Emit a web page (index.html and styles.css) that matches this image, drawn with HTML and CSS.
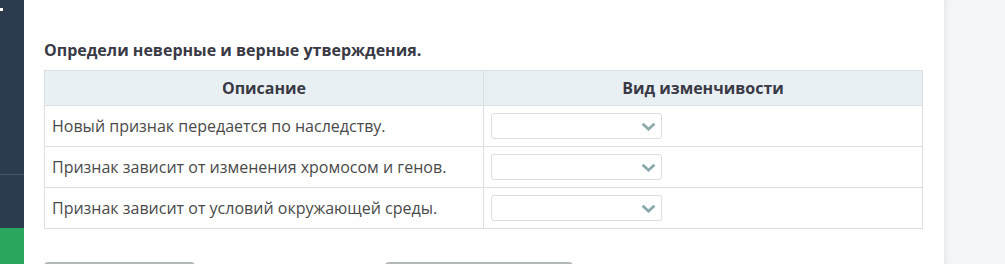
FILE: index.html
```html
<!DOCTYPE html>
<html lang="ru">
<head>
  <meta charset="UTF-8" />
  <title>Вид изменчивости</title>
  <link rel="stylesheet" href="styles.css">
</head>
<body>
  <!-- Left nav strip -->
  <div class="side">
    <span class="dot"></span>
    <div class="side-rule"></div>
    <div class="side-ok"></div>
  </div>

  <!-- Task -->
  <main class="task">
    <h2>Определи неверные и верные утверждения.</h2>
    <table class="grid">
      <thead>
        <tr><th>Описание</th><th>Вид изменчивости</th></tr>
      </thead>
      <tbody>
        <tr>
          <td>Новый признак передается по наследству.</td>
          <td><div class="pick"><svg viewBox="0 0 14 8"><path d="M1.5 1.5 7 6.5 12.5 1.5" /></svg></div></td>
        </tr>
        <tr>
          <td>Признак зависит от изменения хромосом и генов.</td>
          <td><div class="pick"><svg viewBox="0 0 14 8"><path d="M1.5 1.5 7 6.5 12.5 1.5" /></svg></div></td>
        </tr>
        <tr>
          <td>Признак зависит от условий окружающей среды.</td>
          <td><div class="pick"><svg viewBox="0 0 14 8"><path d="M1.5 1.5 7 6.5 12.5 1.5" /></svg></div></td>
        </tr>
      </tbody>
    </table>
    <div class="actions">
      <span class="btn b1"></span>
      <span class="btn b2"></span>
    </div>
  </main>

  <aside class="rest"></aside>
</body>
</html>
```

FILE: styles.css
```css
* { box-sizing: border-box; margin: 0; padding: 0; }
body {
  display: flex;
  height: 264px;
  overflow: hidden;
  font-family: 'Open Sans', sans-serif;
  color: #444;
  background: #fff;
}
.side {
  width: 24px;
  flex: none;
  display: flex;
  flex-direction: column;
  background: #2c3b4e;
}
.dot { width: 3px; height: 3px; margin: 8px 0 0 0; background: #fff; }
.side-rule { margin-top: 163px; height: 1px; background: #46566a; }
.side-ok { margin-top: 53px; flex: 1; background: #2aa75c; }

.task {
  width: 920px;
  flex: none;
  padding: 40px 21px 0 20px;
}
h2 {
  font-size: 16px;
  font-weight: 700;
  line-height: 20px;
  color: #393a45;
  margin-bottom: 10px;
}
.grid {
  width: 100%;
  border-collapse: collapse;
  table-layout: fixed;
  font-size: 16px;
}
.grid th, .grid td { border: 1px solid #dcdfe1; }
.grid th {
  height: 35px;
  background: #e9f0f4;
  font-weight: 700;
  color: #393a45;
  text-align: center;
}
.grid td {
  height: 41px;
  padding: 0 7px;
  color: #4a4a4a;
}
.pick {
  width: 171px;
  height: 26px;
  border: 1px solid #d9dedf;
  border-radius: 3px;
  display: flex;
  align-items: center;
  justify-content: flex-end;
  padding-right: 5px;
}
.pick svg { width: 15px; height: 9px; }
.pick path { fill: none; stroke: #8aa9ab; stroke-width: 2.6; }

.actions { display: flex; margin-top: 33px; }
.btn { height: 10px; border-top: 2px solid #b3b8bb; border-radius: 4px 4px 0 0; }
.b1 { width: 151px; }
.b2 { width: 188px; margin-left: 190px; }

.rest {
  flex: 1;
  background: #f4f7f9;
  box-shadow: inset 5px 0 5px -3px #e3e8ec;
}
```
